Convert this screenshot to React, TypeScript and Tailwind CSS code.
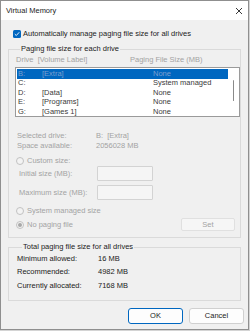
import React from "react";

const drives = [
  { letter: "B:", label: "[Extra]", size: "None" },
  { letter: "C:", label: "", size: "System managed" },
  { letter: "D:", label: "[Data]", size: "None" },
  { letter: "E:", label: "[Programs]", size: "None" },
  { letter: "G:", label: "[Games 1]", size: "None" },
];

function Radio({ checked }: { checked?: boolean }) {
  return (
    <span className="w-[8px] h-[8px] rounded-full border border-[#c2c2c2] bg-[#f3f3f3] flex items-center justify-center shrink-0">
      {checked && <span className="w-[4px] h-[4px] rounded-full bg-[#a8a8a8]" />}
    </span>
  );
}

export default function App() {
  return (
    <div className="w-[250px] h-[331px] bg-[#d4d4d4] font-['Liberation_Sans',sans-serif] text-[7.5px] leading-[10px] text-[#1b1b1b]">
      <div className="w-[249px] h-[330px] border border-[#8f8f8f] bg-[#f0f0f0] flex flex-col">
        {/* title bar */}
        <div className="h-[19px] bg-white flex items-center justify-between pl-[5px] pr-[4px]">
          <span>Virtual Memory</span>
          <svg width="8" height="8" viewBox="0 0 8 8" className="mr-[1px]">
            <path d="M1 1 L7 7 M7 1 L1 7" stroke="#222" strokeWidth="0.9" />
          </svg>
        </div>

        <div className="flex-1 pl-[7px] pr-[7px]">
          {/* auto manage */}
          <div className="mt-[9px] h-[10px] flex items-center">
            <span className="ml-[5px] w-[8px] h-[8px] rounded-[1.5px] bg-[#0067c0] flex items-center justify-center">
              <svg width="6" height="6" viewBox="0 0 6 6">
                <path d="M0.8 3.1 L2.3 4.5 L5.2 1.3" stroke="#fff" strokeWidth="0.9" fill="none" />
              </svg>
            </span>
            <span className="ml-[2px]">Automatically manage paging file size for all drives</span>
          </div>

          {/* per drive */}
          <fieldset className="mt-[5px] border border-[#dadada] pl-[6px] pr-0 pb-[6px]">
            <legend className="ml-[5px] px-[1px] leading-[10px]">Paging file size for each drive</legend>
            <div className="mt-[1px] h-[10px] flex items-center text-[#a3a3a3]">
              <span className="ml-[1px] w-[114px]">Drive&nbsp; [Volume Label]</span>
              <span>Paging File Size (MB)</span>
            </div>
            <div className="mt-[2px] h-[50px] border border-[#9a9a9a] bg-white flex p-px">
              <div className="flex-1 flex flex-col">
                {drives.map((d, i) => (
                  <div
                    key={d.letter}
                    className={`h-[9.5px] flex items-center ${i === 0 ? "bg-[#0067c0] text-[#7d9fcf]" : "text-[#3a3a3a]"}`}
                  >
                    <span className="ml-px w-[24px]">{d.letter}</span>
                    <span className="w-[111px]">{d.label}</span>
                    <span>{d.size}</span>
                  </div>
                ))}
              </div>
              <div className="w-[10px] flex justify-center">
                <div className="mt-[11px] w-px h-[21px] rounded-full bg-[#8a8a8a]" />
              </div>
            </div>

            <div className="mt-[14px] h-[10px] flex items-center text-[#a3a3a3]">
              <span className="ml-[2px] w-[79px]">Selected drive:</span>
              <span>B:&nbsp; [Extra]</span>
            </div>
            <div className="h-[10px] flex items-center text-[#a3a3a3]">
              <span className="ml-[2px] w-[79px]">Space available:</span>
              <span>2056028 MB</span>
            </div>

            <div className="mt-[5px] h-[10px] flex items-center text-[#a3a3a3]">
              <span className="ml-px">
                <Radio />
              </span>
              <span className="ml-[3px]">Custom size:</span>
            </div>
            <div className="h-[15px] flex items-center text-[#a3a3a3]">
              <span className="ml-[4px] w-[78px]">Initial size (MB):</span>
              <div className="w-[56px] h-[15px] border border-[#d3d3d3] bg-[#f5f5f5] rounded-[1px]" />
            </div>
            <div className="mt-[4px] h-[15px] flex items-center text-[#a3a3a3]">
              <span className="ml-[4px] w-[78px]">Maximum size (MB):</span>
              <div className="w-[56px] h-[15px] border border-[#d3d3d3] bg-[#f5f5f5] rounded-[1px]" />
            </div>

            <div className="mt-[6px] h-[10px] flex items-center text-[#a3a3a3]">
              <span className="ml-px">
                <Radio />
              </span>
              <span className="ml-[3px]">System managed size</span>
            </div>
            <div className="mt-[2px] h-[13px] flex items-center text-[#a3a3a3]">
              <span className="ml-px">
                <Radio checked />
              </span>
              <span className="ml-[3px] flex-1">No paging file</span>
              <div className="mr-[5px] w-[54px] h-[13px] border border-[#e0e0e0] bg-[#f6f6f6] rounded-[2px] flex items-center justify-center">
                Set
              </div>
            </div>
          </fieldset>

          {/* totals */}
          <fieldset className="mt-[4px] border border-[#dadada] pl-[8px] pb-[7px]">
            <legend className="ml-[5px] px-[1px] leading-[10px]">Total paging file size for all drives</legend>
            <div className="h-[13.5px] flex items-center">
              <span className="w-[81px]">Minimum allowed:</span>
              <span>16 MB</span>
            </div>
            <div className="h-[13.5px] flex items-center">
              <span className="w-[81px]">Recommended:</span>
              <span>4982 MB</span>
            </div>
            <div className="h-[13.5px] flex items-center">
              <span className="w-[81px]">Currently allocated:</span>
              <span>7168 MB</span>
            </div>
          </fieldset>

          {/* buttons */}
          <div className="mt-[7px] -mr-[3px] flex justify-end gap-[6px]">
            <button className="w-[55px] h-[16px] border border-[#0067c0] bg-[#fdfdfd] rounded-[3px] flex items-center justify-center">
              OK
            </button>
            <button className="w-[55px] h-[16px] border border-[#d0d0d0] bg-[#fdfdfd] rounded-[3px] flex items-center justify-center">
              Cancel
            </button>
          </div>
        </div>
      </div>
    </div>
  );
}
